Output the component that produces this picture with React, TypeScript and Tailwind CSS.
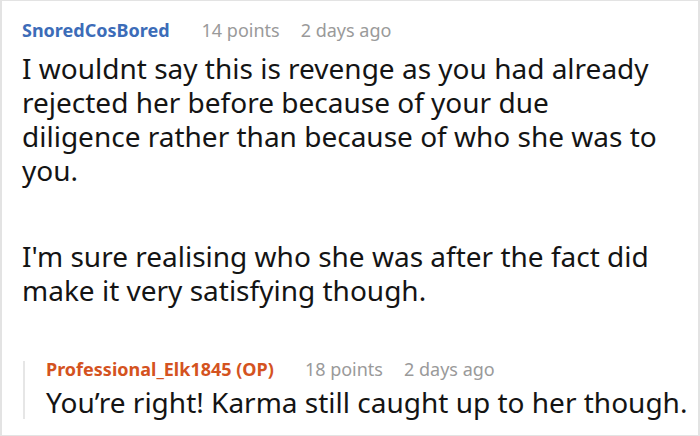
import React from "react";

export default function App() {
  return (
    <div
      className="w-[700px] h-[436px] bg-white border-y border-x-2 border-[#e3e3e3] overflow-hidden pl-[20px] pt-[16px]"
      style={{ fontFamily: '"Noto Sans", "Open Sans", sans-serif' }}
    >
      <div className="flex items-baseline text-[18px] leading-[26px]">
        <span className="font-bold text-[#3c6cb8]">SnoredCosBored</span>
        <span className="ml-[32px] text-[#9a9a9a]">14 points</span>
        <span className="ml-[21px] text-[#9a9a9a]">2 days ago</span>
      </div>
      <div className="text-[28px] leading-[34px] text-[#141414] mt-[8px] w-[645px]">
        <p>
          I wouldnt say this is revenge as you had already rejected her before
          because of your due diligence rather than because of who she was to
          you.
        </p>
        <p className="mt-[52px]">
          I'm sure realising who she was after the fact did make it very
          satisfying though.
        </p>
      </div>
      <div className="mt-[54px] ml-[1px] border-l-2 border-[#e6e6e6] pl-[21px]">
        <div className="flex items-baseline text-[18px] leading-[16px]">
          <span className="font-bold text-[#d4531f]">Professional_Elk1845 (OP)</span>
          <span className="ml-[31px] text-[#9a9a9a]">18 points</span>
          <span className="ml-[21px] text-[#9a9a9a]">2 days ago</span>
        </div>
        <p className="mt-[8px] text-[28px] leading-[34px] text-[#141414]">
          You’re right! Karma still caught up to her though.
        </p>
      </div>
    </div>
  );
}
